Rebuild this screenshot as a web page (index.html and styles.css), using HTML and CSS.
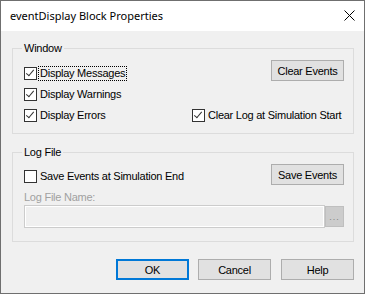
FILE: index.html
```html
<!DOCTYPE html>
<html lang="en">
<head>
    <meta charset="UTF-8">
    <title>eventDisplay Block Properties</title>
    <link rel="stylesheet" href="styles.css">
</head>
<body>
<div class="dialog">
    <div class="titlebar">
        <span class="caption">eventDisplay Block Properties</span>
        <span class="close">
            <svg width="11" height="11" viewBox="0 0 11 11">
                <path d="M0.5 0.5 L10.5 10.5 M10.5 0.5 L0.5 10.5" stroke="#000" stroke-width="1" fill="none"/>
            </svg>
        </span>
    </div>
    <div class="content">
        <div class="group group-window">
            <div class="legend">Window</div>
            <label class="check c1"><span class="box on"></span><span class="text focus">Display Messages</span></label>
            <label class="check c2"><span class="box on"></span><span class="text">Display Warnings</span></label>
            <label class="check c3"><span class="box on"></span><span class="text">Display Errors</span></label>
            <div class="btn clear-btn">Clear Events</div>
            <label class="check c4"><span class="box on"></span><span class="text">Clear Log at Simulation Start</span></label>
        </div>

        <div class="group group-log">
            <div class="legend">Log File</div>
            <div class="log-row">
                <label class="check save-check"><span class="box"></span><span class="text">Save Events at Simulation End</span></label>
                <div class="btn">Save Events</div>
            </div>
            <div class="field-label">Log File Name:</div>
            <div class="field-row">
                <div class="field"></div>
                <div class="browse">...</div>
            </div>
        </div>

        <div class="actions">
            <div class="btn ok">OK</div>
            <div class="btn cancel">Cancel</div>
            <div class="btn help">Help</div>
        </div>
    </div>
</div>
</body>
</html>
```

FILE: styles.css
```css
* {
    box-sizing: border-box;
}

body {
    margin: 0;
    font-family: "Liberation Sans", Arial, sans-serif;
    font-size: 11px;
    letter-spacing: -0.25px;
    color: #000000;
}

.dialog {
    width: 365px;
    height: 294px;
    border: 1px solid #6f6f6f;
    background-color: #f0f0f0;
    display: flex;
    flex-direction: column;
}

.titlebar {
    height: 30px;
    background-color: #ffffff;
    display: flex;
    align-items: center;
    padding-left: 9px;
    padding-right: 9px;
}

.caption {
    font-family: "Noto Sans", "Open Sans", sans-serif;
    font-size: 11px;
    letter-spacing: 0;
    flex: 1;
    padding-bottom: 1px;
}

.close {
    width: 11px;
    height: 11px;
    display: flex;
    margin-top: -2px;
}

.content {
    flex: 1;
    padding: 17px 10px 0 11px;
}

.group {
    position: relative;
    border: 1px solid #dcdcdc;
    width: 342px;
}

.legend {
    position: absolute;
    top: -7px;
    left: 9px;
    padding: 0 2px;
    line-height: 13px;
    background-color: #f0f0f0;
}

.group-window {
    height: 86px;
    padding: 14px 9px 0 11px;
    display: grid;
    grid-template-columns: 168px minmax(0, 1fr);
    grid-template-rows: 21px 21px 21px;
}

.check {
    display: flex;
    align-items: center;
    white-space: nowrap;
}

.box {
    width: 13px;
    height: 13px;
    border: 1px solid #333333;
    background-color: #ffffff;
    margin-right: 3px;
    position: relative;
    flex: none;
}

.box.on:after {
    content: '';
    position: absolute;
    left: 3px;
    top: 0px;
    width: 3px;
    height: 7px;
    border-right: 1px solid #333333;
    border-bottom: 1px solid #333333;
    transform: rotate(40deg);
}

.text {
    line-height: 13px;
}

.focus {
    outline: 1px dotted #000000;
    padding: 0 1px;
    margin-left: -1px;
}

.c1 { grid-column: 1; grid-row: 1; }
.c2 { grid-column: 1; grid-row: 2; }
.c3 { grid-column: 1; grid-row: 3; }
.c4 { grid-column: 2; grid-row: 3; }

.clear-btn {
    grid-column: 2;
    grid-row: 1;
    justify-self: end;
    margin-top: -3px;
}

.btn {
    width: 73px;
    height: 21px;
    border: 1px solid #adadad;
    background-color: #e1e1e1;
    display: flex;
    align-items: center;
    justify-content: center;
    flex: none;
}

.group-log {
    margin-top: 18px;
    height: 90px;
    padding: 11px 9px 0 11px;
}

.log-row {
    display: flex;
    justify-content: space-between;
    align-items: flex-start;
}

.save-check {
    margin-top: 6px;
}

.field-label {
    color: #a0a0a0;
    line-height: 13px;
    margin-top: 6px;
}

.field-row {
    display: flex;
    align-items: flex-start;
    margin-top: 1px;
}

.field {
    width: 301px;
    height: 23px;
    border: 1px solid #cccccc;
    box-shadow: inset 0 0 0 1px #ffffff;
    background-color: #f0f0f0;
}

.browse {
    width: 19px;
    height: 21px;
    margin-top: 1px;
    background-color: #cccccc;
    border: 1px solid #bfbfbf;
    color: #838383;
    font-size: 9px;
    display: flex;
    justify-content: center;
    align-items: flex-end;
    padding-bottom: 4px;
    letter-spacing: 1px;
}

.actions {
    display: flex;
    justify-content: flex-end;
    margin-top: 17px;
}

.ok {
    border: 2px solid #0078d7;
}

.cancel {
    margin-left: 9px;
}

.help {
    margin-left: 10px;
}
```
